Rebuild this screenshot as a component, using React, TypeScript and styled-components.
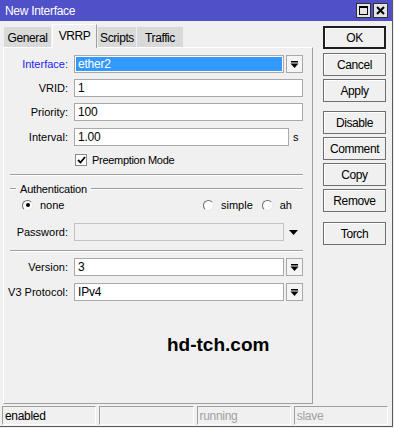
import React from 'react'
import styled, { createGlobalStyle } from 'styled-components'

const GlobalStyle = createGlobalStyle`
  html, body {
    margin: 0;
    padding: 0;
    background: #f0f0f0;
  }
  body {
    font-family: "Liberation Sans", Arial, sans-serif;
    font-size: 11px;
    color: #000;
  }
`

const Window = styled.div`
  width: 393px;
  height: 427px;
  box-sizing: border-box;
  border-right: 1px solid #5a5a5a;
  border-bottom: 1px solid #5a5a5a;
  background: #f0f0f0;
  display: flex;
  flex-direction: column;
`

const TitleBar = styled.div`
  height: 21px;
  flex-shrink: 0;
  background: #5050c8;
  color: #fff;
  font-size: 12px;
  letter-spacing: -0.3px;
  display: flex;
  align-items: center;
  justify-content: space-between;
  padding: 0 4px 0 5px;
`

const TitleButtons = styled.div`
  display: flex;
  gap: 2px;
`

const TitleButton = styled.div`
  width: 15px;
  height: 15px;
  box-sizing: border-box;
  background: #e4e4e4;
  border: 1px solid #303030;
  display: flex;
  align-items: center;
  justify-content: center;
`

const Body = styled.div`
  flex: 1;
  display: flex;
  padding: 3px 0 0 3px;
  min-height: 0;
`

const LeftColumn = styled.div`
  width: 310px;
  display: flex;
  flex-direction: column;
`

const TabStrip = styled.div`
  height: 23px;
  display: flex;
  align-items: flex-end;
  padding-left: 1px;
  gap: 1px;
  position: relative;
  z-index: 1;
`

const Tab = styled.div<{ $active?: boolean; $w: number }>`
  box-sizing: border-box;
  width: ${p => p.$w}px;
  height: ${p => (p.$active ? 24 : 20)}px;
  margin-bottom: ${p => (p.$active ? -1 : 0)}px;
  padding-top: ${p => (p.$active ? 4 : 3)}px;
  text-align: center;
  font-size: 12px;
  letter-spacing: -0.4px;
  background: ${p => (p.$active ? '#f0f0f0' : '#d9d9d9')};
  border-top: 1px solid ${p => (p.$active ? '#fff' : '#d9d9d9')};
  border-left: 1px solid ${p => (p.$active ? '#fff' : '#d9d9d9')};
  border-right: 1px solid ${p => (p.$active ? '#a0a0a0' : '#d9d9d9')};
`

const Panel = styled.div`
  flex: 1;
  box-sizing: border-box;
  border-top: 1px solid #fff;
  border-left: 1px solid #fff;
  border-right: 1px solid #a0a0a0;
  border-bottom: 1px solid #a0a0a0;
  padding: 7px 9px 0 0;
  display: flex;
  flex-direction: column;
`

const Row = styled.div<{ $mt?: number }>`
  display: flex;
  align-items: center;
  height: 18px;
  margin-top: ${p => p.$mt ?? 0}px;
`

const Label = styled.div<{ $accent?: boolean }>`
  width: 64px;
  flex-shrink: 0;
  text-align: right;
  margin-right: 6px;
  color: ${p => (p.$accent ? '#1c1cf0' : '#000')};
  white-space: nowrap;
`

const Field = styled.div<{ $disabled?: boolean }>`
  flex: 1;
  height: 18px;
  box-sizing: border-box;
  border: 1px solid ${p => (p.$disabled ? '#c4c4c4' : '#a9a9a9')};
  background: ${p => (p.$disabled ? '#f0f0f0' : '#fff')};
  display: flex;
  align-items: center;
  padding: 1px;
`

const FieldText = styled.span<{ $selected?: boolean }>`
  flex: 1;
  height: 100%;
  display: flex;
  align-items: center;
  padding-left: 2px;
  font-size: 12px;
  letter-spacing: -0.2px;
  background: ${p => (p.$selected ? '#3399ff' : 'transparent')};
  color: ${p => (p.$selected ? '#fff' : '#000')};
`

const DropButton = styled.div`
  width: 17px;
  height: 18px;
  flex-shrink: 0;
  box-sizing: border-box;
  margin-left: 2px;
  border: 1px solid #a9a9a9;
  background: #f4f4f4;
  display: flex;
  align-items: center;
  justify-content: center;
`

const Unit = styled.span`
  width: 10px;
  margin-left: 4px;
  flex-shrink: 0;
`

const TriangleSlot = styled.div`
  width: 19px;
  flex-shrink: 0;
  display: flex;
  justify-content: center;
`

const CheckRow = styled.div`
  display: flex;
  align-items: center;
  margin: 7px 0 0 71px;
  height: 13px;
  gap: 5px;
  letter-spacing: -0.3px;
`

const CheckBox = styled.div`
  width: 12px;
  height: 12px;
  box-sizing: border-box;
  border: 1px solid #8a8a8a;
  background: #fff;
  display: flex;
  align-items: center;
  justify-content: center;
`

const Separator = styled.div<{ $mt: number }>`
  height: 0;
  margin: ${p => p.$mt}px 0 0 6px;
  border-top: 1px solid #a0a0a0;
  border-bottom: 1px solid #fff;
`

const GroupHeader = styled.div`
  display: flex;
  align-items: center;
  margin: 6px 0 0 6px;
  height: 14px;
  gap: 4px;
  letter-spacing: -0.2px;
`

const GroupLine = styled.div<{ $grow?: boolean }>`
  width: ${p => (p.$grow ? 'auto' : '6px')};
  flex: ${p => (p.$grow ? 1 : 'none')};
  border-top: 1px solid #a0a0a0;
  border-bottom: 1px solid #fff;
`

const RadioRow = styled.div`
  display: flex;
  align-items: center;
  height: 14px;
  margin: 2px 0 0 18px;
`

const RadioOption = styled.label<{ $w: number }>`
  display: flex;
  align-items: center;
  gap: 7px;
  width: ${p => p.$w}px;
`

const RadioCircle = styled.span<{ $checked?: boolean }>`
  width: 11px;
  height: 11px;
  box-sizing: border-box;
  border-radius: 50%;
  border: 1px solid;
  border-color: #6e6e6e #e8e8e8 #e8e8e8 #6e6e6e;
  background: #fff;
  display: flex;
  align-items: center;
  justify-content: center;
  &::after {
    content: '';
    width: 4px;
    height: 4px;
    border-radius: 50%;
    background: ${p => (p.$checked ? '#000' : 'transparent')};
  }
`

const Watermark = styled.div`
  margin: 33px 0 0 163px;
  font-size: 19px;
  font-weight: bold;
  color: #000;
`

const ButtonColumn = styled.div`
  width: 63px;
  margin: 2px 0 0 10px;
  display: flex;
  flex-direction: column;
`

const Button = styled.div<{ $default?: boolean; $mt?: number }>`
  height: 23px;
  box-sizing: border-box;
  margin-top: ${p => p.$mt ?? 3}px;
  border: ${p => (p.$default ? '2px solid #1e1e1e' : '1px solid #6e6e6e')};
  box-shadow: inset 1px 1px 0 #fff;
  background: #f0f0f0;
  display: flex;
  align-items: center;
  justify-content: center;
  font-size: 12px;
  letter-spacing: -0.4px;
`

const StatusBar = styled.div`
  height: 22px;
  flex-shrink: 0;
  box-sizing: border-box;
  display: flex;
  gap: 3px;
  padding: 2px 4px 1px 2px;
`

const StatusCell = styled.div<{ $dim?: boolean }>`
  flex: 1;
  box-sizing: border-box;
  border-top: 1px solid #a0a0a0;
  border-left: 1px solid #a0a0a0;
  border-right: 1px solid #fff;
  border-bottom: 1px solid #fff;
  padding-left: 2px;
  display: flex;
  align-items: center;
  font-size: 12px;
  letter-spacing: -0.3px;
  color: ${p => (p.$dim ? '#a0a0a0' : '#000')};
`

const DropIcon = () => (
  <svg width="9" height="9" viewBox="0 0 9 9">
    <rect x="1" y="1" width="7" height="1.5" fill="#000" />
    <polygon points="0.5,3.5 8.5,3.5 4.5,8" fill="#000" />
  </svg>
)

const DownTriangle = () => (
  <svg width="9" height="5" viewBox="0 0 9 5">
    <polygon points="0,0 9,0 4.5,5" fill="#000" />
  </svg>
)

const CheckMark = () => (
  <svg width="9" height="8" viewBox="0 0 9 8">
    <polyline points="1,4 3.5,6.5 8,1" fill="none" stroke="#000" strokeWidth="1.8" />
  </svg>
)

const tabs = [
  { label: 'General', w: 47 },
  { label: 'VRRP', w: 45, active: true },
  { label: 'Scripts', w: 38 },
  { label: 'Traffic', w: 46 }
]

const buttons: { label: string; mt?: number; isDefault?: boolean }[] = [
  { label: 'OK', mt: 0, isDefault: true },
  { label: 'Cancel', mt: 4 },
  { label: 'Apply' },
  { label: 'Disable', mt: 9 },
  { label: 'Comment' },
  { label: 'Copy' },
  { label: 'Remove' },
  { label: 'Torch', mt: 10 }
]

export default function App() {
  return (
    <Window>
      <GlobalStyle />
      <TitleBar>
        <span>New Interface</span>
        <TitleButtons>
          <TitleButton>
            <svg width="9" height="9" viewBox="0 0 9 9">
              <rect x="0.5" y="0.5" width="8" height="8" fill="none" stroke="#000" />
              <rect x="0.5" y="0.5" width="8" height="1.5" fill="#000" />
            </svg>
          </TitleButton>
          <TitleButton>
            <svg width="9" height="9" viewBox="0 0 9 9">
              <path d="M1 1 L8 8 M8 1 L1 8" stroke="#000" strokeWidth="2" />
            </svg>
          </TitleButton>
        </TitleButtons>
      </TitleBar>
      <Body>
        <LeftColumn>
          <TabStrip>
            {tabs.map(t => (
              <Tab key={t.label} $w={t.w} $active={t.active}>
                {t.label}
              </Tab>
            ))}
          </TabStrip>
          <Panel>
            <Row>
              <Label $accent>Interface:</Label>
              <Field>
                <FieldText $selected>ether2</FieldText>
              </Field>
              <DropButton>
                <DropIcon />
              </DropButton>
            </Row>
            <Row $mt={6}>
              <Label>VRID:</Label>
              <Field>
                <FieldText>1</FieldText>
              </Field>
            </Row>
            <Row $mt={6}>
              <Label>Priority:</Label>
              <Field>
                <FieldText>100</FieldText>
              </Field>
            </Row>
            <Row $mt={7}>
              <Label>Interval:</Label>
              <Field>
                <FieldText>1.00</FieldText>
              </Field>
              <Unit>s</Unit>
            </Row>
            <CheckRow>
              <CheckBox>
                <CheckMark />
              </CheckBox>
              <span>Preemption Mode</span>
            </CheckRow>
            <Separator $mt={8} />
            <GroupHeader>
              <GroupLine />
              <span>Authentication</span>
              <GroupLine $grow />
            </GroupHeader>
            <RadioRow>
              <RadioOption $w={181}>
                <RadioCircle $checked />
                none
              </RadioOption>
              <RadioOption $w={59}>
                <RadioCircle />
                simple
              </RadioOption>
              <RadioOption $w={30}>
                <RadioCircle />
                ah
              </RadioOption>
            </RadioRow>
            <Row $mt={11}>
              <Label>Password:</Label>
              <Field $disabled />
              <TriangleSlot>
                <DownTriangle />
              </TriangleSlot>
            </Row>
            <Separator $mt={9} />
            <Row $mt={6}>
              <Label>Version:</Label>
              <Field>
                <FieldText>3</FieldText>
              </Field>
              <DropButton>
                <DropIcon />
              </DropButton>
            </Row>
            <Row $mt={7}>
              <Label>V3 Protocol:</Label>
              <Field>
                <FieldText>IPv4</FieldText>
              </Field>
              <DropButton>
                <DropIcon />
              </DropButton>
            </Row>
            <Watermark>hd-tch.com</Watermark>
          </Panel>
        </LeftColumn>
        <ButtonColumn>
          {buttons.map(b => (
            <Button key={b.label} $default={b.isDefault} $mt={b.mt}>
              {b.label}
            </Button>
          ))}
        </ButtonColumn>
      </Body>
      <StatusBar>
        <StatusCell>enabled</StatusCell>
        <StatusCell />
        <StatusCell $dim>running</StatusCell>
        <StatusCell $dim>slave</StatusCell>
      </StatusBar>
    </Window>
  )
}
